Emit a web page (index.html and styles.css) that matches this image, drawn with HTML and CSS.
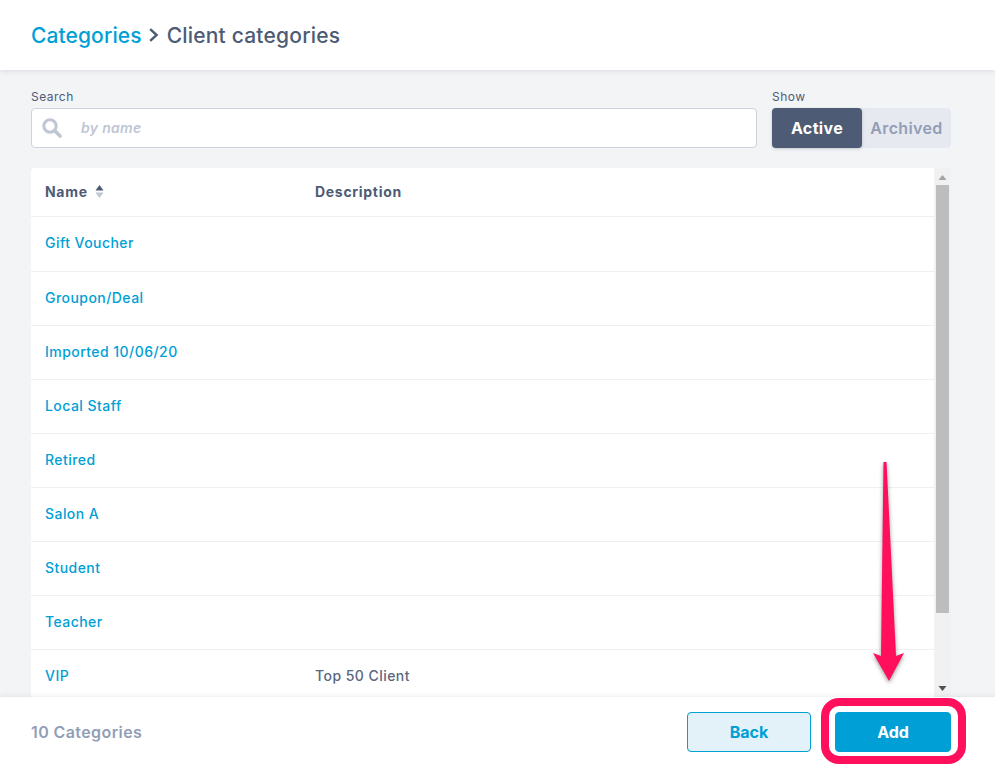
FILE: index.html
```html
<!DOCTYPE html>
<html lang="en">
<head>
<meta charset="utf-8">
<title>Client categories</title>
<link rel="stylesheet" href="styles.css">
</head>
<body>
<div class="page">
  <header class="topbar">
    <a class="crumb-link">Categories</a>
    <svg class="crumb-sep" width="12" height="14" viewBox="0 0 12 14"><path d="M2.2 1.2 L8.600 7 L2.2 12.800" fill="none" stroke="#4d5b75" stroke-width="2.400"/></svg>
    <span class="crumb-current">Client categories</span>
  </header>
  <main class="content">
    <div class="filters">
      <div class="field field-search">
        <label class="field-label">Search</label>
        <div class="search-box">
          <svg class="search-icon" width="20" height="20" viewBox="0 0 20 20"><circle cx="8" cy="8" r="6.200" fill="none" stroke="#bfc6d4" stroke-width="3"/><path d="M12.600 12.600 L18 18" stroke="#bfc6d4" stroke-width="3.600" stroke-linecap="round"/></svg>
          <span class="search-placeholder">by name</span>
        </div>
      </div>
      <div class="field field-show">
        <label class="field-label">Show</label>
        <div class="toggle">
          <span class="toggle-on">Active</span>
          <span class="toggle-off">Archived</span>
        </div>
      </div>
    </div>
    <div class="table-wrap">
      <div class="table">
        <div class="row row-head">
          <div class="cell-name head-name">Name
            <svg class="sort-icon" width="9" height="15" viewBox="0 0 9 15"><path d="M4.500 1 L8.500 6.500 H0.500 Z" fill="#4d5b75"/><path d="M4.500 14 L8.500 8.500 H0.500 Z" fill="#bfc6d4"/></svg>
          </div>
          <div class="cell-desc">Description</div>
        </div>
        <div class="row row-first"><a class="cell-name link">Gift Voucher</a><div class="cell-desc"></div></div>
        <div class="row"><a class="cell-name link">Groupon/Deal</a><div class="cell-desc"></div></div>
        <div class="row"><a class="cell-name link">Imported 10/06/20</a><div class="cell-desc"></div></div>
        <div class="row"><a class="cell-name link">Local Staff</a><div class="cell-desc"></div></div>
        <div class="row"><a class="cell-name link">Retired</a><div class="cell-desc"></div></div>
        <div class="row"><a class="cell-name link">Salon A</a><div class="cell-desc"></div></div>
        <div class="row"><a class="cell-name link">Student</a><div class="cell-desc"></div></div>
        <div class="row"><a class="cell-name link">Teacher</a><div class="cell-desc"></div></div>
        <div class="row"><a class="cell-name link">VIP</a><div class="cell-desc text">Top 50 Client</div></div>
      </div>
      <div class="scrollbar">
        <svg class="scroll-arrow" width="9" height="5" viewBox="0 0 9 5"><path d="M4.500 0 L8.500 5 H0.500 Z" fill="#a3a3a3"/></svg>
        <div class="scroll-thumb"></div>
        <div class="scroll-rest"></div>
        <svg class="scroll-arrow" width="9" height="5" viewBox="0 0 9 5"><path d="M4.500 5 L8.500 0 H0.500 Z" fill="#505050"/></svg>
      </div>
    </div>
  </main>
  <footer class="footer">
    <span class="count">10 Categories</span>
    <div class="actions">
      <button class="btn btn-back">Back</button>
      <button class="btn btn-add">Add</button>
    </div>
  </footer>
  <div class="highlight-box"></div>
  <svg class="highlight-arrow" width="50" height="240" viewBox="0 0 50 240"><path d="M21.500 2 L24.500 2 L34 196 L42 193 L27 221 L11 193 L19 196 Z" fill="#ff0f5c"/></svg>
</div>
</body>
</html>
```
FILE: styles.css
```css
* { box-sizing: border-box; }
html, body { margin: 0; padding: 0; }
body { font-family: Inter, "Liberation Sans", sans-serif; color: #4d5b75; background: #fff; }
.page { position: relative; width: 995px; height: 764px; display: flex; flex-direction: column; overflow: hidden; }

.topbar { height: 70px; flex: none; display: flex; align-items: center; gap: 6px; padding-left: 31px; background: #fff; box-shadow: 0 1px 5px rgba(60, 70, 90, .14); position: relative; z-index: 2; font-size: 21px; font-weight: 500; }
.crumb-link { color: #009fd6; letter-spacing: .1px; }
.crumb-current { color: #4d5b75; letter-spacing: .2px; margin-left: 1px; }
.crumb-sep { flex: none; }

.content { flex: 1; min-height: 0; background: #f3f4f6; padding: 20px 44px 0 31px; display: flex; flex-direction: column; overflow: hidden; }
.filters { display: flex; gap: 15px; height: 78px; flex: none; }
.field { display: flex; flex-direction: column; }
.field-search { flex: 1; }
.field-show { width: 179px; }
.field-label { font-size: 12px; line-height: 14px; margin-bottom: 4px; letter-spacing: .5px; color: #4d5b75; }
.search-box { height: 40px; display: flex; align-items: center; background: #fff; border: 1px solid #cdd2dc; border-radius: 4px; padding-left: 10px; }
.search-icon { flex: none; }
.search-placeholder { margin: -2px 0 0 19px; font-size: 14px; font-weight: 600; font-style: italic; letter-spacing: .3px; color: #bfc6d4; }
.toggle { height: 40px; display: flex; align-items: stretch; background: #e6e9ef; border-radius: 4px; font-size: 16px; font-weight: 700; letter-spacing: .35px; }
.toggle-on { width: 90px; display: flex; align-items: center; justify-content: center; background: #4d5b75; color: #fff; border-radius: 4px; box-shadow: 0 1px 3px rgba(60, 70, 90, .25); }
.toggle-off { flex: 1; display: flex; align-items: center; justify-content: center; color: #929eb6; font-weight: 600; }

.table-wrap { flex: 1; min-height: 0; display: flex; }
.table { flex: 1; min-width: 0; background: #fff; border-radius: 4px 0 0 0; overflow: hidden; }
.row { display: flex; align-items: center; height: 54px; padding: 0 0 2px 14px; border-bottom: 1px solid #eff0f3; font-size: 14px; font-weight: 500; letter-spacing: .45px; }
.row-head { height: 49px; font-weight: 700; color: #4d5b75; padding-bottom: 1px; letter-spacing: .7px; }
.row-first { height: 55px; padding-bottom: 4px; }
.cell-name { width: 270px; flex: none; display: flex; align-items: center; gap: 7px; }
.link { color: #009fd6; }
.text { color: #5a677f; }
.sort-icon { flex: none; }

.scrollbar { width: 17px; flex: none; display: flex; flex-direction: column; align-items: center; background: #f1f1f1; padding-top: 7px; }
.scrollbar .scroll-arrow { flex: none; }
.scroll-thumb { width: 13px; height: 428px; flex: none; margin-top: 5px; background: #bdbdbd; }
.scroll-rest { flex: 1; }
.scrollbar .scroll-arrow:last-child { margin-bottom: 6px; }

.footer { height: 67px; flex: none; display: flex; align-items: center; justify-content: space-between; padding: 3px 44px 0 31px; background: #fff; box-shadow: 0 -1px 5px rgba(60, 70, 90, .10); position: relative; z-index: 2; }
.count { font-size: 16px; font-weight: 600; letter-spacing: .4px; color: #929eb6; }
.actions { display: flex; gap: 24px; }
.btn { height: 40px; font-family: inherit; font-size: 16px; font-weight: 700; border-radius: 4px; padding: 0; }
.btn-back { width: 124px; background: #e3f2f9; color: #009fd6; border: 1px solid #009fd6; }
.btn-add { width: 116px; background: #009fd6; color: #fff; border: 1px solid #009fd6; }

.highlight-box { position: absolute; z-index: 3; left: 821px; top: 698px; width: 145px; height: 66px; border: 8px solid #ff0f5c; border-radius: 18px; }
.highlight-arrow { position: absolute; z-index: 3; left: 862px; top: 460px; filter: drop-shadow(0 2px 2px rgba(0, 0, 0, .4)); }
```
